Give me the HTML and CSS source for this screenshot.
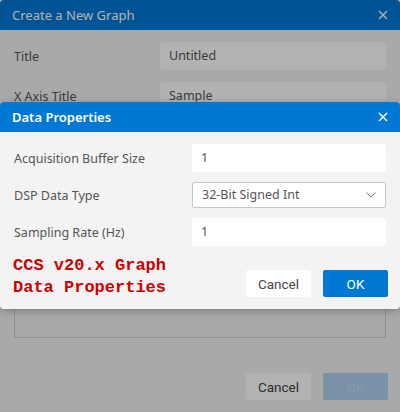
FILE: index.html
```html
<!DOCTYPE html>
<html lang="en">
<head>
<meta charset="UTF-8" />
<meta name="viewport" content="width=device-width, initial-scale=1" />
<title>Create a New Graph</title>
<link rel="stylesheet" href="styles.css">
</head>
<body>

<div class="dialog graph-dialog">
  <div class="dialog-header">
    <span>Create a New Graph</span>
    <svg class="close" width="10" height="10" viewBox="0 0 10 10"><path d="M1 1 L9 9 M9 1 L1 9" /></svg>
  </div>
  <div class="dialog-body">
    <div class="row"><label>Title</label><div class="field">Untitled</div></div>
    <div class="row"><label>X Axis Title</label><div class="field">Sample</div></div>
    <div class="row"><label>Y Axis Title</label><div class="field">Value</div></div>
    <div class="textarea"></div>
  </div>
  <div class="dialog-footer">
    <button class="btn">Cancel</button>
    <button class="btn primary" disabled>OK</button>
  </div>
</div>

<div class="overlay"></div>

<div class="dialog data-dialog">
  <div class="dialog-header">
    <span class="strong">Data Properties</span>
    <svg class="close" width="10" height="10" viewBox="0 0 10 10"><path d="M1 1 L9 9 M9 1 L1 9" /></svg>
  </div>
  <div class="dialog-body">
    <div class="row"><label>Acquisition Buffer Size</label><div class="field">1</div></div>
    <div class="row"><label>DSP Data Type</label>
      <div class="field select">32-Bit Signed Int
        <svg width="10" height="6" viewBox="0 0 10 6"><path d="M0.5 0.5 L5 5 L9.5 0.5" /></svg>
      </div>
    </div>
    <div class="row"><label>Sampling Rate (Hz)</label><div class="field">1</div></div>
  </div>
  <div class="dialog-footer">
    <div class="note">CCS v20.x Graph<br>Data Properties</div>
    <button class="btn">Cancel</button>
    <button class="btn primary">OK</button>
  </div>
</div>

</body>
</html>
```

FILE: styles.css
```css
body {
  margin: 0;
  width: 400px;
  height: 412px;
  overflow: hidden;
  font-family: 'Noto Sans', 'Open Sans', sans-serif;
  font-size: 12.5px;
  color: #555;
  background: #f3f3f3;
}
.dialog {
  background: #f3f3f3;
  border-radius: 4px;
  overflow: hidden;
}
.graph-dialog {
  height: 412px;
  display: flex;
  flex-direction: column;
}
.dialog-header {
  height: 30px;
  background: #0078d4;
  color: #fff;
  font-size: 13px;
  display: flex;
  align-items: center;
  justify-content: space-between;
  padding: 0 12px;
}
.dialog-header .strong { font-weight: 600; }
.close path {
  stroke: #fff;
  stroke-width: 1.4;
  fill: none;
}
.dialog-body {
  padding: 12px 14px 0;
  display: flex;
  flex-direction: column;
  gap: 12px;
}
.row {
  display: grid;
  grid-template-columns: 146px 1fr;
  align-items: center;
  height: 28px;
}
.field {
  height: 28px;
  line-height: 28px;
  background: #fff;
  border-radius: 2px;
  padding: 0 9px;
  box-sizing: border-box;
}
.textarea {
  height: 174px;
  border: 1px solid #cdcdcd;
  background: #f3f3f3;
}
.graph-dialog .dialog-body { flex: 1; }
.dialog-footer {
  display: flex;
  justify-content: flex-end;
  align-items: flex-end;
  gap: 12px;
  padding: 0 12px 12px;
}
.btn {
  width: 65px;
  height: 27px;
  border: none;
  border-radius: 2px;
  background: #fff;
  color: #444;
  font-family: Roboto, 'Liberation Sans', sans-serif;
  font-size: 13.5px;
  padding: 0;
}
.btn.primary {
  background: #0078d4;
  color: #fff;
}
.btn.primary:disabled {
  background: #aed2f0;
  color: #c4dcef;
}
.overlay {
  position: absolute;
  left: 0;
  top: 0;
  width: 400px;
  height: 412px;
  background: rgba(0, 0, 0, 0.3);
}
.data-dialog {
  position: absolute;
  left: 0;
  top: 102px;
  width: 400px;
  box-shadow: 0 2px 8px rgba(0, 0, 0, 0.25);
}
.data-dialog .row { grid-template-columns: 178px 1fr; }
.data-dialog .dialog-body { gap: 9px; }
.select {
  border: 1px solid #c6c6c6;
  height: 26px;
  line-height: 24px;
  display: flex;
  justify-content: space-between;
  align-items: center;
}
.select path {
  stroke: #777;
  stroke-width: 1;
  fill: none;
}
.data-dialog .dialog-footer {
  margin-top: 9px;
  padding-bottom: 10px;
}
.data-dialog .btn { margin-bottom: 2px; }
.note {
  margin-right: auto;
  padding-left: 1px;
  font-family: 'Liberation Mono', monospace;
  font-weight: bold;
  font-size: 17px;
  line-height: 22px;
  color: #cc0000;
}
```
